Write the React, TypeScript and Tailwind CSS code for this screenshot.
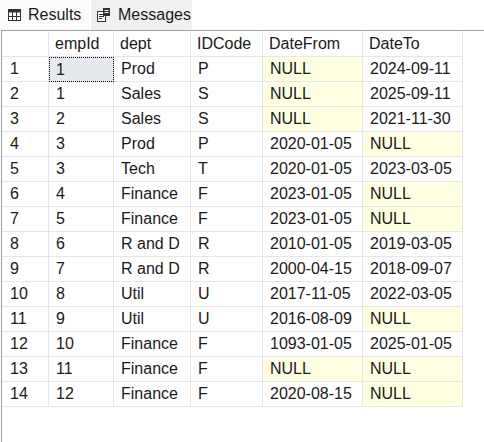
import React from 'react';

const columns = [
  { label: '', w: 'w-[47px]' },
  { label: 'empId', w: 'w-[65px]' },
  { label: 'dept', w: 'w-[77px]' },
  { label: 'IDCode', w: 'w-[72px]' },
  { label: 'DateFrom', w: 'w-[100px]' },
  { label: 'DateTo', w: 'w-[100px]' },
];

const rows: string[][] = [
  ['1', 'Prod', 'P', 'NULL', '2024-09-11'],
  ['1', 'Sales', 'S', 'NULL', '2025-09-11'],
  ['2', 'Sales', 'S', 'NULL', '2021-11-30'],
  ['3', 'Prod', 'P', '2020-01-05', 'NULL'],
  ['3', 'Tech', 'T', '2020-01-05', '2023-03-05'],
  ['4', 'Finance', 'F', '2023-01-05', 'NULL'],
  ['5', 'Finance', 'F', '2023-01-05', 'NULL'],
  ['6', 'R and D', 'R', '2010-01-05', '2019-03-05'],
  ['7', 'R and D', 'R', '2000-04-15', '2018-09-07'],
  ['8', 'Util', 'U', '2017-11-05', '2022-03-05'],
  ['9', 'Util', 'U', '2016-08-09', 'NULL'],
  ['10', 'Finance', 'F', '1093-01-05', '2025-01-05'],
  ['11', 'Finance', 'F', 'NULL', 'NULL'],
  ['12', 'Finance', 'F', '2020-08-15', 'NULL'],
];

function GridIcon() {
  return (
    <svg width="13" height="12" viewBox="0 0 13 12" className="shrink-0">
      <rect x="0.5" y="0.5" width="12" height="11" fill="#fff" stroke="#333" />
      <rect x="0.5" y="0.5" width="12" height="3" fill="#333" />
      <line x1="4.5" y1="0.5" x2="4.5" y2="11.5" stroke="#333" />
      <line x1="8.5" y1="0.5" x2="8.5" y2="11.5" stroke="#333" />
      <line x1="0.5" y1="7.5" x2="12.5" y2="7.5" stroke="#333" />
    </svg>
  );
}

function MessageIcon() {
  return (
    <svg width="14" height="14" viewBox="0 0 14 14" className="shrink-0">
      <rect x="0.5" y="3.5" width="8" height="10" fill="#fff" stroke="#333" />
      <line x1="2" y1="6.5" x2="7" y2="6.5" stroke="#333" />
      <line x1="2" y1="8.5" x2="7" y2="8.5" stroke="#333" />
      <line x1="2" y1="10.5" x2="5" y2="10.5" stroke="#333" />
      <rect x="6" y="0" width="7" height="8" fill="#333" />
      <line x1="7.5" y1="2.5" x2="11.5" y2="2.5" stroke="#fff" />
      <line x1="7.5" y1="4.5" x2="11.5" y2="4.5" stroke="#fff" />
    </svg>
  );
}

export default function App() {
  return (
    <div className="w-[484px] h-[442px] bg-white overflow-hidden font-['Liberation_Sans',Arial,sans-serif] text-[16px] text-[#1a1a1a]">
      {/* Tabs */}
      <div className="flex h-[30px] items-end bg-white">
        <div className="flex h-[30px] w-[89px] items-center gap-[7px] bg-[#fbfbfb] pl-[8px]">
          <GridIcon />
          <span>Results</span>
        </div>
        <div className="ml-[2px] flex h-[30px] w-[101px] items-center gap-[7px] bg-[#f0f0f0] pl-[6px]">
          <MessageIcon />
          <span>Messages</span>
        </div>
      </div>

      {/* Grid */}
      <div className="ml-[1px] h-[412px] border-l border-t border-[#a0a0a0]">
        <div className="flex h-[26px]">
          {columns.map((c, i) => (
            <div
              key={i}
              className={`${c.w} flex items-center border-b border-r border-[#e6e6e6] pl-[6px] leading-none`}
            >
              {c.label}
            </div>
          ))}
        </div>
        {rows.map((r, ri) => (
          <div key={ri} className="flex h-[25px]">
            <div className="w-[47px] flex items-center border-b border-r border-[#e6e6e6] pl-[8px] leading-none">
              {ri + 1}
            </div>
            {r.map((v, ci) => {
              const isNull = v === 'NULL';
              const selected = ri === 0 && ci === 0;
              return (
                <div
                  key={ci}
                  className={`${columns[ci + 1].w} flex items-center border-b border-r leading-none ${
                    selected
                      ? 'border border-dotted border-black bg-[#e6eaef] pl-[6px]'
                      : 'border-[#e6e6e6] pl-[7px]'
                  } ${isNull ? 'bg-[#ffffe1]' : ''}`}
                >
                  {v}
                </div>
              );
            })}
          </div>
        ))}
      </div>
    </div>
  );
}
